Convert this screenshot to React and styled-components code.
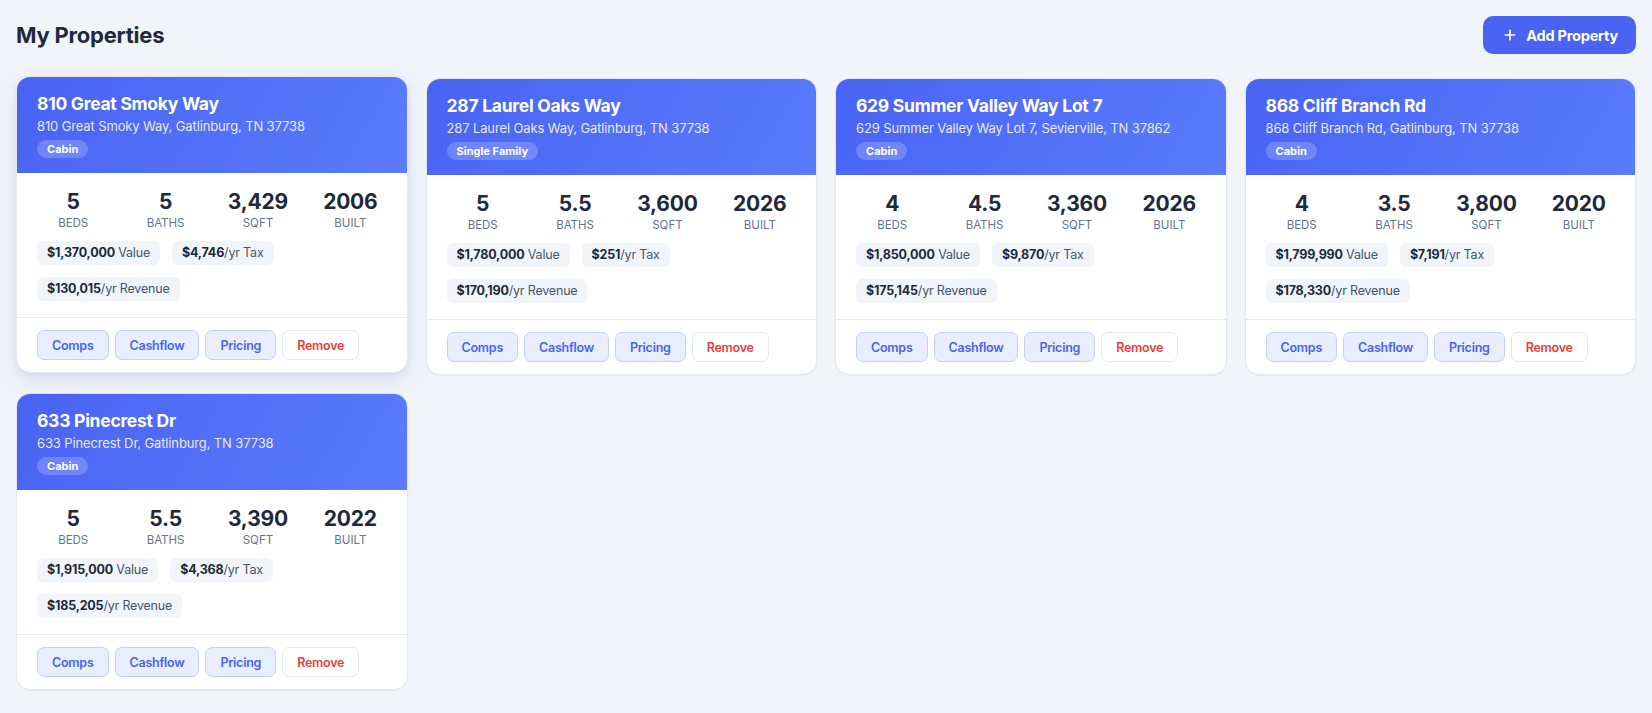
import React from 'react';
import styled, { createGlobalStyle } from 'styled-components';
import { Plus } from 'lucide-react';

const GlobalStyle = createGlobalStyle`
  * {
    box-sizing: border-box;
  }
  body {
    margin: 0;
    background: #f1f4f9;
    font-family: Inter, 'Noto Sans', sans-serif;
    color: #1e293b;
  }
`;

const properties = [
  {
    id: 1,
    name: '810 Great Smoky Way',
    address: '810 Great Smoky Way, Gatlinburg, TN 37738',
    type: 'Cabin',
    beds: '5',
    baths: '5',
    sqft: '3,429',
    built: '2006',
    value: '$1,370,000',
    tax: '$4,746',
    revenue: '$130,015',
    raised: true,
  },
  {
    id: 2,
    name: '287 Laurel Oaks Way',
    address: '287 Laurel Oaks Way, Gatlinburg, TN 37738',
    type: 'Single Family',
    beds: '5',
    baths: '5.5',
    sqft: '3,600',
    built: '2026',
    value: '$1,780,000',
    tax: '$251',
    revenue: '$170,190',
  },
  {
    id: 3,
    name: '629 Summer Valley Way Lot 7',
    address: '629 Summer Valley Way Lot 7, Sevierville, TN 37862',
    type: 'Cabin',
    beds: '4',
    baths: '4.5',
    sqft: '3,360',
    built: '2026',
    value: '$1,850,000',
    tax: '$9,870',
    revenue: '$175,145',
  },
  {
    id: 4,
    name: '868 Cliff Branch Rd',
    address: '868 Cliff Branch Rd, Gatlinburg, TN 37738',
    type: 'Cabin',
    beds: '4',
    baths: '3.5',
    sqft: '3,800',
    built: '2020',
    value: '$1,799,990',
    tax: '$7,191',
    revenue: '$178,330',
  },
  {
    id: 5,
    name: '633 Pinecrest Dr',
    address: '633 Pinecrest Dr, Gatlinburg, TN 37738',
    type: 'Cabin',
    beds: '5',
    baths: '5.5',
    sqft: '3,390',
    built: '2022',
    value: '$1,915,000',
    tax: '$4,368',
    revenue: '$185,205',
  },
];

const PropertyCard = ({ property }) => (
  <Card $raised={property.raised}>
    <CardHeader>
      <CardTitle>{property.name}</CardTitle>
      <CardAddress>{property.address}</CardAddress>
      <TypeBadge>{property.type}</TypeBadge>
    </CardHeader>
    <CardBody>
      <Stats>
        <Stat>
          <StatValue>{property.beds}</StatValue>
          <StatLabel>Beds</StatLabel>
        </Stat>
        <Stat>
          <StatValue>{property.baths}</StatValue>
          <StatLabel>Baths</StatLabel>
        </Stat>
        <Stat>
          <StatValue>{property.sqft}</StatValue>
          <StatLabel>Sqft</StatLabel>
        </Stat>
        <Stat>
          <StatValue>{property.built}</StatValue>
          <StatLabel>Built</StatLabel>
        </Stat>
      </Stats>
      <Chips>
        <Chip>
          <strong>{property.value}</strong> Value
        </Chip>
        <Chip>
          <strong>{property.tax}</strong>/yr Tax
        </Chip>
        <Chip>
          <strong>{property.revenue}</strong>/yr Revenue
        </Chip>
      </Chips>
    </CardBody>
    <CardFooter>
      <ActionButton>Comps</ActionButton>
      <ActionButton>Cashflow</ActionButton>
      <ActionButton>Pricing</ActionButton>
      <ActionButton $danger>Remove</ActionButton>
    </CardFooter>
  </Card>
);

const App = () => {
  return (
    <Page>
      <GlobalStyle />
      <TopBar>
        <PageTitle>My Properties</PageTitle>
        <AddButton>
          <Plus size={16} strokeWidth={2.5} />
          Add Property
        </AddButton>
      </TopBar>
      <Grid>
        {properties.map((property) => (
          <PropertyCard key={property.id} property={property} />
        ))}
      </Grid>
    </Page>
  );
};

export default App;

const Page = styled.main`
  min-height: 100vh;
  padding: 16px 16px 24px;
`;

const TopBar = styled.header`
  display: flex;
  align-items: center;
  justify-content: space-between;
  margin-bottom: 24px;
`;

const PageTitle = styled.h1`
  margin: 0;
  font-size: 22px;
  font-weight: 700;
  letter-spacing: -0.01em;
  color: #1e293b;
`;

const AddButton = styled.button`
  display: flex;
  align-items: center;
  gap: 8px;
  height: 38px;
  padding: 0 18px 0 19px;
  border: none;
  border-radius: 10px;
  background: #4a63f2;
  color: #fff;
  font-family: inherit;
  font-size: 14.5px;
  font-weight: 700;
  letter-spacing: -0.015em;
  cursor: pointer;
`;

const Grid = styled.section`
  display: grid;
  grid-template-columns: repeat(4, 1fr);
  gap: 18px;
`;

const Card = styled.article`
  display: flex;
  flex-direction: column;
  background: #fff;
  border: 1px solid #e2e8f0;
  border-radius: 14px;
  overflow: hidden;
  transform: translateY(${(p) => (p.$raised ? '-2px' : '0')});
  box-shadow: ${(p) =>
    p.$raised
      ? '0 8px 20px rgba(74, 99, 242, 0.12), 0 2px 6px rgba(15, 23, 42, 0.06)'
      : '0 1px 2px rgba(15, 23, 42, 0.04)'};
`;

const CardHeader = styled.div`
  display: flex;
  flex-direction: column;
  align-items: flex-start;
  height: 96px;
  padding: 15px 20px 0;
  background: linear-gradient(120deg, #4963f4 0%, #5a7cfb 100%);
  color: #fff;
`;

const CardTitle = styled.h2`
  margin: 0;
  font-size: 17.5px;
  font-weight: 700;
  line-height: 24px;
  letter-spacing: -0.015em;
`;

const CardAddress = styled.div`
  margin-top: 1px;
  font-size: 13px;
  line-height: 18px;
  letter-spacing: -0.01em;
  color: rgba(255, 255, 255, 0.88);
`;

const TypeBadge = styled.span`
  margin-top: 5px;
  padding: 0 10px;
  height: 18px;
  line-height: 18px;
  border-radius: 9px;
  background: rgba(255, 255, 255, 0.2);
  font-size: 11px;
  font-weight: 700;
`;

const CardBody = styled.div`
  padding: 16px 20px 16px;
  border-bottom: 1px solid #e7ebf1;
`;

const Stats = styled.div`
  display: grid;
  grid-template-columns: repeat(4, 1fr);
  margin: 0 -10px;
`;

const Stat = styled.div`
  display: flex;
  flex-direction: column;
  align-items: center;
`;

const StatValue = styled.span`
  font-size: 21px;
  font-weight: 700;
  line-height: 26px;
  letter-spacing: -0.01em;
  color: #1e293b;
`;

const StatLabel = styled.span`
  font-size: 11.5px;
  line-height: 16px;
  text-transform: uppercase;
  color: #64748b;
`;

const Chips = styled.div`
  display: flex;
  flex-wrap: wrap;
  gap: 12px;
  margin-top: 10px;
`;

const Chip = styled.span`
  height: 24px;
  line-height: 24px;
  padding: 0 10px;
  border-radius: 6px;
  background: #f1f4f9;
  font-size: 12.5px;
  letter-spacing: -0.015em;
  color: #475569;

  strong {
    font-weight: 700;
    color: #1e293b;
  }
`;

const CardFooter = styled.div`
  display: flex;
  gap: 6px;
  padding: 12px 20px;
`;

const ActionButton = styled.button`
  height: 30px;
  padding: 0 14px;
  border-radius: 7px;
  border: 1px solid ${(p) => (p.$danger ? '#e2e8f0' : '#c6d0f5')};
  background: ${(p) => (p.$danger ? '#fff' : '#e8eeff')};
  color: ${(p) => (p.$danger ? '#ef3b3b' : '#4a63f2')};
  font-family: inherit;
  font-size: 12.5px;
  font-weight: 600;
  letter-spacing: -0.02em;
  cursor: pointer;
`;
